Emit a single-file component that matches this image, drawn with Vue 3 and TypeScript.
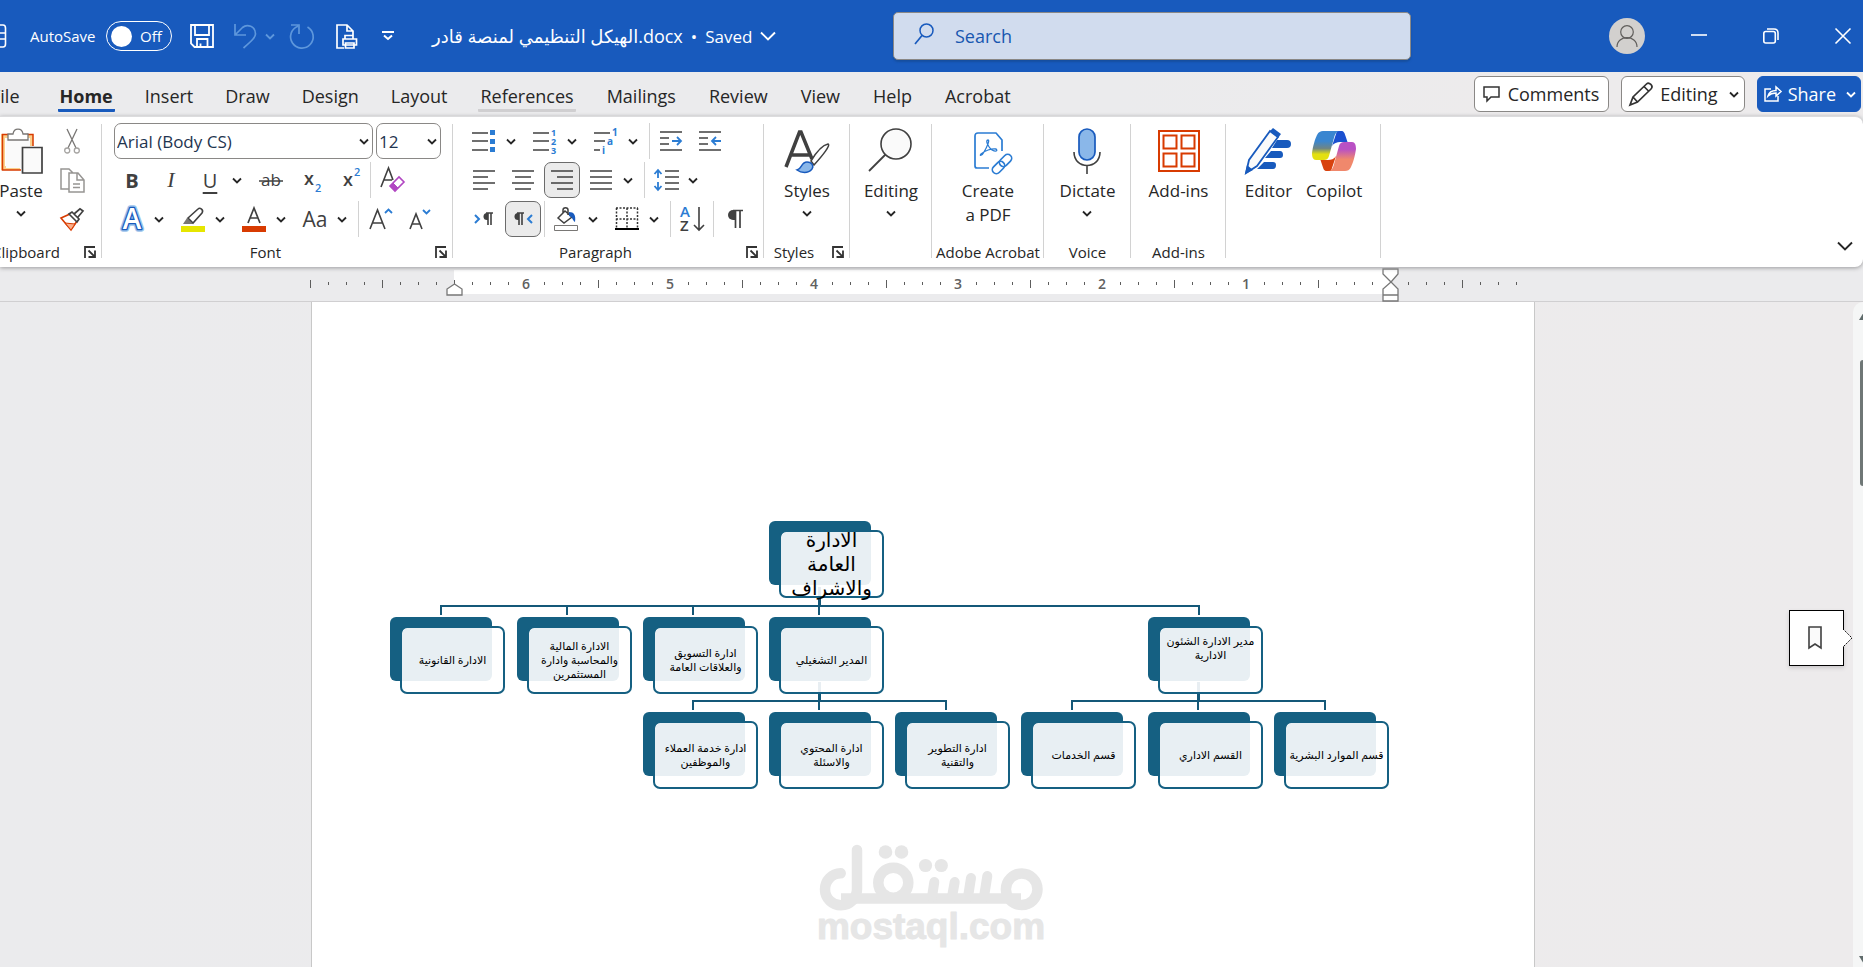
<script setup lang="ts">
import { ref } from 'vue'

interface Glyph { w: number; h: number; body: string }

const ink = 'fill="none" stroke="#404040" stroke-width="1.6"'
const line = 'fill="none" stroke="#fff" stroke-width="1.6"'
const sans = 'font-family="Open Sans, Noto Sans, sans-serif"'
const blue = '#2b7cd3'

const glyphs: Record<string, Glyph> = {
  chevron: { w: 10, h: 7, body: '<path d="M1 1.5 5 5.5 9 1.5" fill="none" stroke="currentColor" stroke-width="1.800"/>' },
  chevronWide: { w: 16, h: 10, body: '<path d="M1 1.5 8 8.5 15 1.5" fill="none" stroke="currentColor" stroke-width="1.900"/>' },
  table: { w: 8, h: 24, body: `<path d="M-8 1H3Q5.500 1 5.500 4V20Q5.500 23 3 23H-8M-8 9H5M-8 15H5" ${line}/>` },
  save: { w: 24, h: 24, body: '<path d="M1 1H23V23H4.500L1 19.500ZM5 1V11H19V1M7 23V15H17.500V23M10.500 23V19.500" fill="none" stroke="#fff" stroke-width="1.8"/>' },
  undo: { w: 23, h: 25, body: '<path d="M1 0V11H12M1.500 10.500 8.500 3.500C13 -.5 21.500 2 21.500 10 21.500 13 19 15.500 9.500 24" fill="none" stroke="#5e97dc" stroke-width="1.700"/>' },
  redo: { w: 25, h: 25, body: '<path d="M1 1H9V10M17.500 3A11.300 11.300 0 1 1 8 2.200" fill="none" stroke="#5e97dc" stroke-width="1.700"/>' },
  print: { w: 22, h: 25, body: '<path d="M8 24H1V1H11L17 7V11M11 1V7H17M9 15V11.500H17V15M7 15H20.500V21H7ZM9.500 19H18V24H9.500Z" fill="none" stroke="#fff" stroke-width="1.700"/>' },
  more: { w: 12, h: 10, body: '<path d="M0 1H12M2 4.500 6 8 10 4.500" fill="none" stroke="#fff" stroke-width="2"/>' },
  search: { w: 20, h: 22, body: '<circle cx="12.500" cy="7.500" r="6.500" fill="none" stroke="#185abd" stroke-width="1.500"/><path d="M8 12.500 1 21" stroke="#185abd" stroke-width="1.700"/>' },
  person: { w: 24, h: 24, body: '<circle cx="12" cy="8" r="6.300" fill="none" stroke="#605e5c" stroke-width="1.200"/><path d="M2 23C2 10.500 22 10.500 22 23" fill="none" stroke="#605e5c" stroke-width="1.200"/>' },
  minimize: { w: 16, h: 16, body: '<path d="M0 7H16" stroke="#fff" stroke-width="1.600"/>' },
  restore: { w: 16, h: 16, body: '<rect x=".8" y="3.500" width="11.500" height="11.500" rx="2" fill="none" stroke="#fff" stroke-width="1.600"/><path d="M4 1H11Q15 1 15 5V12" fill="none" stroke="#fff" stroke-width="1.600"/>' },
  close: { w: 16, h: 16, body: '<path d="M.5.5 15.500 15.500M15.500.5.5 15.500" stroke="#fff" stroke-width="1.600"/>' },
  comment: { w: 17, h: 17, body: '<path d="M1 1H16V11H8L4 15V11H1Z" fill="none" stroke="#333" stroke-width="1.500"/>' },
  pencil: { w: 24, h: 24, body: '<path d="M1 23 4 15 17.500 2C20 -.5 25 4 22 7L8.500 20ZM4 15 8.500 20M15 4.500 19.500 9" fill="none" stroke="#333" stroke-width="1.700"/>' },
  share: { w: 18, h: 18, body: '<path d="M7 5H1V17H14V12M4 12C5 8 8 6.500 12 6.500V3L17 7.500 12 12V9C8 9 6 10 4 12Z" transform="translate(0 -1)" fill="none" stroke="#fff" stroke-width="1.500"/>' },
  paste: { w: 44, h: 46, body: '<path d="M8 6H2V42H21V38H6V10H30V18H34V6H28" fill="#fbd08c"/><path d="M7 10H31V40H7Z" fill="#fafafa"/><path d="M9 6.500H3.500V42H22M28 6.500H34V18" fill="none" stroke="#d83b01" stroke-width="1.500"/><path d="M9 12V6H14C15-.5 23-.5 24 6H29V12Z" fill="#fff" stroke="#797775" stroke-width="1.300"/><path d="M23.500 19.500H43V45H23.500Z" fill="#fafafa" stroke="#404040" stroke-width="1.700"/>' },
  cut: { w: 16, h: 25, body: '<path d="M3 0 12 19M13 0 4 19" fill="none" stroke="#797775" stroke-width="1.300"/><circle cx="3.200" cy="21.500" r="2.500" fill="none" stroke="#a5a3a1" stroke-width="1.300"/><circle cx="12.800" cy="21.500" r="2.500" fill="none" stroke="#a5a3a1" stroke-width="1.300"/>' },
  copy: { w: 25, h: 25, body: '<path d="M9 21H1V1H9L13 5M9 5H18L24 12V24H9ZM17 5V12H24M13 16H20M13 19.500H20" fill="none" stroke="#979593" stroke-width="1.500"/>' },
  painter: { w: 24, h: 23, body: '<path d="M1 10 10 6 17 13 11 22Z" fill="#fff" stroke="#d83b01" stroke-width="1.600"/><path d="M5 15 15 16 11 22Z" fill="#fbb08c" stroke="#d83b01"/><path d="M9 6 12 4 19 11 17 14ZM14 6 20 .8 23 3 18 9" fill="#fff" stroke="#404040" stroke-width="1.700"/>' },
  strike: { w: 24, h: 24, body: `<text x="12" y="18" ${sans} font-size="17" text-anchor="middle" fill="#404040">ab</text><path d="M0 13H24" stroke="#404040" stroke-width="1.500"/>` },
  sub: { w: 20, h: 26, body: `<text x="4" y="18" ${sans} font-size="18" font-weight="600" fill="#404040">x</text><text x="15" y="25" ${sans} font-size="11" font-weight="600" fill="${blue}">2</text>` },
  sup: { w: 20, h: 26, body: `<text x="4" y="19" ${sans} font-size="18" font-weight="600" fill="#404040">x</text><text x="15" y="9" ${sans} font-size="11" font-weight="600" fill="${blue}">2</text>` },
  clear: { w: 25, h: 26, body: `<path d="M1 20 8.500 1 13 13M3.500 13H12" ${ink}/><path d="M10 19 19 10 24 15 15 24Z" fill="#fff" stroke="#b146c2" stroke-width="1.600"/><path d="M10 19 13 16 18 21 15 24Z" fill="#b146c2" stroke="#b146c2"/>` },
  effects: { w: 26, h: 26, body: `<g ${sans} font-size="28" font-weight="600" text-anchor="middle" stroke-linejoin="round"><text x="13" y="23" fill="#fff" stroke="#9cc3ec" stroke-width="5.500">A</text><text x="13" y="23" fill="#fff" stroke="#185abd" stroke-width="2.600">A</text><text x="13" y="23" fill="#fff">A</text></g>` },
  highlight: { w: 24, h: 25, body: '<path d="M0 19H24V25H0Z" fill="#e6e600"/><path d="M2 17 6 11 12 17Z" fill="#797775"/><path d="M7 11 17 2C19 0 23 3 21 6L12 16ZM7 11 12 16" fill="#fff" stroke="#404040" stroke-width="1.600"/>' },
  fontColor: { w: 24, h: 25, body: '<path d="M0 19H24V25H0Z" fill="#d83b01"/><path d="M6 16 12 1 18 16M8 11H16" fill="none" stroke="#404040" stroke-width="1.700"/>' },
  grow: { w: 23, h: 24, body: `<path d="M1 22 8.500 3 16 22M3.500 16H13.500" ${ink}/><path d="M16 6 19.500 2.500 23 6" fill="none" stroke="${blue}" stroke-width="1.800"/>` },
  shrink: { w: 21, h: 24, body: `<path d="M1 22 7 7 13 22M3 17H11" ${ink}/><path d="M14 3 17.500 6.500 21 3" fill="none" stroke="${blue}" stroke-width="1.800"/>` },
  bullets: { w: 24, h: 24, body: `<path d="M0 4H16M0 12H16M0 21H16" ${ink}/><path d="M18 1H23V6H18ZM18 10H23V15H18ZM18 18H23V23H18Z" fill="${blue}"/>` },
  numbering: { w: 24, h: 26, body: `<path d="M0 5H16M0 13H16M0 22H16" ${ink}/><g ${sans} font-size="9" font-weight="700" fill="${blue}"><text x="18" y="8">1</text><text x="18" y="17">2</text><text x="18" y="26">3</text></g>` },
  multilevel: { w: 24, h: 26, body: `<path d="M0 5H16M0 13H11M0 22H6" ${ink}/><g ${sans} font-size="10" font-weight="700" fill="${blue}"><text x="18" y="8">1</text><text x="13" y="17">a</text><text x="8" y="26">i</text></g>` },
  indentOut: { w: 22, h: 22, body: `<path d="M0 2H22M0 8H9M0 14H9M0 20H22" ${ink}/><path d="M12 11H21M17 7 21 11 17 15" fill="none" stroke="${blue}" stroke-width="1.800"/>` },
  indentIn: { w: 22, h: 22, body: `<path d="M0 2H22M0 8H9M0 14H9M0 20H22" ${ink}/><path d="M22 11H13M17 7 13 11 17 15" fill="none" stroke="${blue}" stroke-width="1.800"/>` },
  left: { w: 22, h: 22, body: `<path d="M0 2H22M0 8H15M0 14H22M0 20H15" ${ink}/>` },
  center: { w: 22, h: 22, body: `<path d="M0 2H22M3 8H19M0 14H22M3 20H19" ${ink}/>` },
  right: { w: 22, h: 22, body: `<path d="M0 2H22M6 8H22M0 14H22M6 20H22" ${ink}/>` },
  justify: { w: 22, h: 22, body: `<path d="M0 2H22M0 8H22M0 14H22M0 20H22" ${ink}/>` },
  spacing: { w: 25, h: 24, body: `<path d="M11 3H25M11 9H25M11 15H25M11 21H25" ${ink}/><path d="M4 10V2M.5 6 4 2 7.500 6M4 14V22M.5 18 4 22 7.500 18" fill="none" stroke="${blue}" stroke-width="1.800"/>` },
  ltr: { w: 20, h: 18, body: `<path d="M1 5 5 9 1 13" fill="none" stroke="${blue}" stroke-width="2"/><path d="M14 3H13A3.500 3.500 0 0 0 13 10H14Z" fill="#404040"/><path d="M14 3V15M17 3V15M12 3H19" ${ink}/>` },
  rtl: { w: 20, h: 18, body: `<path d="M19 5 15 9 19 13" fill="none" stroke="${blue}" stroke-width="2"/><path d="M6 3H5A3.500 3.500 0 0 0 5 10H6Z" fill="#404040"/><path d="M6 3V15M9 3V15M4 3H11" ${ink}/>` },
  bucket: { w: 24, h: 24, body: '<path d="M4 11 11 4 18 10 10 16ZM9 6V3C9 0 14 0 14 3V8" fill="none" stroke="#404040" stroke-width="1.500"/><path d="M15 5C20 5 22 8 21 15 18 13 19 10 15 9Z" fill="#185abd"/><path d="M.5 18.500H23.500V23.500H.5Z" fill="#fff" stroke="#797775"/>' },
  borders: { w: 24, h: 24, body: '<path d="M1 1H23M1 12H23M1.500 1V22M12 1V22M22.500 1V22" fill="none" stroke="#333" stroke-width="1.500" stroke-dasharray="2 1.500"/><path d="M0 22H24" stroke="#000" stroke-width="2"/>' },
  sort: { w: 24, h: 26, body: `<g ${sans} font-size="15" font-weight="600"><text x="0" y="11" fill="${blue}">A</text><text x="0" y="25" fill="#404040">Z</text></g><path d="M19 1V24M14 19 19 24 24 19" ${ink}/>` },
  pilcrow: { w: 16, h: 20, body: '<path d="M8 1H6A5 5 0 0 0 6 11H8Z" fill="#404040"/><path d="M8.500 1V19M13 1V19M6 1.500H16" fill="none" stroke="#404040" stroke-width="1.700"/>' },
  styles: { w: 44, h: 44, body: '<path d="M1 38 14.500 3H16L27 30M6 26H25" fill="none" stroke="#404040" stroke-width="3.500"/><path d="M26 32C32 22 38 16 43 15 46 16 38 26 29 36Z" fill="#fff" stroke="#404040" stroke-width="1.500"/><path d="M12 41C17 40 16 33 22 33 27 33 29 37 27 40 23 45 16 44 12 41Z" fill="#8ab7e9" stroke="#185abd" stroke-width="1.500"/>' },
  find: { w: 46, h: 50, body: '<circle cx="28" cy="18" r="15" fill="#fafafa" stroke="#404040" stroke-width="1.600"/><path d="M17.500 28.500 1 45" stroke="#404040" stroke-width="1.800"/>' },
  pdf: { w: 28, h: 38, body: `<g fill="none" stroke="${blue}" stroke-width="1.700" stroke-linejoin="round"><path d="M15 36H3Q1 36 1 34V4Q1 1 4 1H22L28 8V19"/><path d="M14 8C11 8 14 15 18 18 22 20 24 19 22 17 18 16 10 19 7 22 5 24 8 24 10 20 13 15 16 8 14 8Z" stroke-width="1.300"/><g transform="rotate(-45 28 32)"><rect x="16" y="28" width="14" height="8" rx="4"/><rect x="26" y="28" width="14" height="8" rx="4"/></g></g>` },
  mic: { w: 28, h: 46, body: `<rect x="6" y="1" width="16" height="31" rx="8" fill="#8ab7e9" stroke="#185abd" stroke-width="1.700"/><path d="M1 24C1 42 27 42 27 24M14 37V46" ${ink}/>` },
  addins: { w: 42, h: 42, body: '<path d="M1 1H41V41H1Z" fill="#fff" stroke="#d83b01" stroke-width="2"/><path d="M5.500 5.500H18.500V18.500H5.500ZM23.500 5.500H36.500V18.500H23.500ZM5.500 23.500H18.500V36.500H5.500ZM23.500 23.500H36.500V36.500H23.500Z" fill="none" stroke="#d83b01" stroke-width="2"/>' },
  editor: { w: 46, h: 46, body: '<path d="M32 12H42Q46 12 46 16 46 20 42 20H27ZM26 23H35Q38 23 38 27 38 30 35 30H20ZM19 34H28Q31 34 31 37 31 41 28 41H12Z" fill="#185abd"/><path d="M1 45 4 32 25 3 33 9 12 38Z" fill="#fafafa" stroke="#185abd" stroke-width="1.800"/><path d="M25 3 28 0 36 6 33 10ZM0 46 2 37 8 42Z" fill="#185abd"/>' },
  copilot: { w: 44, h: 40, body: '<defs><linearGradient id="cpA" x1="0" y1="0" x2="0" y2="1"><stop offset=".35" stop-color="#3a86d0"/><stop offset=".6" stop-color="#6f8584"/><stop offset=".8" stop-color="#e3e010"/></linearGradient><linearGradient id="cpB" x1="0" y1="0" x2="0" y2="1"><stop offset=".25" stop-color="#b951c4"/><stop offset=".6" stop-color="#f0886c"/></linearGradient></defs><path d="M25 0H29C32 0 32.500 2 33.500 5L35.500 11H28C25 11 22 12 20 15Z" fill="#1b50d0"/><path d="M19 40H15C12 40 11.500 38 10.500 35L8.500 29H16C19 29 22 28 24 25Z" fill="#d8430f"/><path d="M11 0H28C25 0 23.500 2 22.500 5L17 25C16 28 14.500 29 12 29H4C1 29 0 26 0 22 1 15 3 8 5 4 6.500 1 8.500 0 11 0Z" fill="url(#cpA)"/><path d="M33 40H16C19 40 20.500 38 21.500 35L27 15C28 12 29.500 11 32 11H40C43 11 44 14 44 18 43 25 41 32 39 36 37.500 39 35.500 40 33 40Z" fill="url(#cpB)"/>' },
  launcher: { w: 12, h: 12, body: '<path d="M1 12V1H11M4.500 4.500 11 11M11 4.500V11H4.500" fill="none" stroke="#333" stroke-width="1.800"/>' },
  bookmark: { w: 14, h: 24, body: '<path d="M1 1H13V22L7 18 1 22Z" fill="#fafafa" stroke="#404040" stroke-width="1.600"/>' },
}

const tabs = ['File', 'Home', 'Insert', 'Draw', 'Design', 'Layout', 'References', 'Mailings', 'Review', 'View', 'Help', 'Acrobat']
const activeTab = ref('Home')

interface Tool { name: string; icon?: string; text?: string; cls?: string; split?: boolean; on?: boolean; sep?: boolean }
const sep: Tool = { name: 'sep', sep: true }

const clipboardTools: Tool[] = [
  { name: 'Cut', icon: 'cut' }, { name: 'Copy', icon: 'copy' }, { name: 'Format Painter', icon: 'painter' },
]
const fontRows: Tool[][] = [
  [
    { name: 'Bold', text: 'B', cls: 'bold' }, { name: 'Italic', text: 'I', cls: 'italic' },
    { name: 'Underline', text: 'U', cls: 'underline', split: true }, { name: 'Strikethrough', icon: 'strike' },
    { name: 'Subscript', icon: 'sub' }, { name: 'Superscript', icon: 'sup' }, sep,
    { name: 'Clear Formatting', icon: 'clear' },
  ],
  [
    { name: 'Text Effects', icon: 'effects', split: true }, { name: 'Highlight', icon: 'highlight', split: true },
    { name: 'Font Color', icon: 'fontColor', split: true }, { name: 'Change Case', text: 'Aa', cls: 'case', split: true }, sep,
    { name: 'Grow Font', icon: 'grow' }, { name: 'Shrink Font', icon: 'shrink' },
  ],
]
const paragraphRows: Tool[][] = [
  [
    { name: 'Bullets', icon: 'bullets', split: true }, { name: 'Numbering', icon: 'numbering', split: true },
    { name: 'Multilevel List', icon: 'multilevel', split: true }, sep,
    { name: 'Decrease Indent', icon: 'indentOut' }, { name: 'Increase Indent', icon: 'indentIn' },
  ],
  [
    { name: 'Align Left', icon: 'left' }, { name: 'Center', icon: 'center' }, { name: 'Align Right', icon: 'right', on: true },
    { name: 'Justify', icon: 'justify', split: true }, sep, { name: 'Line Spacing', icon: 'spacing', split: true },
  ],
  [
    { name: 'Left-to-Right', icon: 'ltr' }, { name: 'Right-to-Left', icon: 'rtl', on: true }, sep,
    { name: 'Shading', icon: 'bucket', split: true }, { name: 'Borders', icon: 'borders', split: true }, sep,
    { name: 'Sort', icon: 'sort' }, sep, { name: 'Show Marks', icon: 'pilcrow' },
  ],
]

interface Big { label: string[]; icon: string; arrow?: boolean }
interface Group { cls: string; label: string; launcher?: boolean; items: Big[] }
const groups: Group[] = [
  { cls: 'g-styles', label: 'Styles', launcher: true, items: [{ label: ['Styles'], icon: 'styles', arrow: true }] },
  { cls: 'g-editing', label: '', items: [{ label: ['Editing'], icon: 'find', arrow: true }] },
  { cls: 'g-adobe', label: 'Adobe Acrobat', items: [{ label: ['Create', 'a PDF'], icon: 'pdf' }] },
  { cls: 'g-voice', label: 'Voice', items: [{ label: ['Dictate'], icon: 'mic', arrow: true }] },
  { cls: 'g-addins', label: 'Add-ins', items: [{ label: ['Add-ins'], icon: 'addins' }] },
  { cls: 'g-editor', label: '', items: [{ label: ['Editor'], icon: 'editor' }, { label: ['Copilot'], icon: 'copilot' }] },
]

/* Ruler: one inch is 144 units, counted leftwards from the right margin. */
const rulerZero = 1079
const ticks = Array.from({ length: 68 }, (_, i) => {
  const k = i - 7
  const numbered = k > 0 && k < 52 && k % 8 === 0
  return { x: rulerZero - k * 18, tall: k % 4 === 0, label: numbered ? String(k / 8) : '', hidden: k === 0 || numbered }
})

interface Node { x: number; y: number; lines: string[]; cls?: string }
const nodes: Node[] = [
  { x: 379, y: 0, lines: ['الادارة', 'العامة', 'والاشراف'], cls: 'root' },
  { x: 0, y: 96, lines: ['الادارة القانونية'] },
  { x: 127, y: 96, lines: ['الادارة المالية', 'والمحاسبة وادارة', 'المستثمرين'] },
  { x: 253, y: 96, lines: ['ادارة التسويق', 'والعلاقات العامة'] },
  { x: 379, y: 96, lines: ['المدير التشغيلي'] },
  { x: 758, y: 96, lines: ['مدير الادارة الشئون', 'الادارية'], cls: 'raised' },
  { x: 253, y: 191, lines: ['ادارة خدمة العملاء', 'والموظفين'] },
  { x: 379, y: 191, lines: ['ادارة المحتوي', 'والاسئلة'] },
  { x: 505, y: 191, lines: ['ادارة التطوير', 'والتقنية'] },
  { x: 631, y: 191, lines: ['قسم الخدمات'] },
  { x: 758, y: 191, lines: ['القسم الاداري'] },
  { x: 884, y: 191, lines: ['قسم الموارد البشرية'] },
]
</script>

<template>
  <div class="app">
    <header class="titlebar">
      <div class="quick">
        <button class="plain q-table" aria-label="Window"><svg width="8" height="24" v-html="glyphs.table.body" /></button>
        <label class="autosave" for="autosave">AutoSave</label>
        <label class="toggle"><input id="autosave" type="checkbox"><span class="knob" /><span>Off</span></label>
        <button class="plain q-save" aria-label="Save"><svg width="24" height="24" v-html="glyphs.save.body" /></button>
        <button class="plain q-undo" aria-label="Undo"><svg width="23" height="25" v-html="glyphs.undo.body" /><svg class="dim" width="10" height="7" v-html="glyphs.chevron.body" /></button>
        <button class="plain q-redo" aria-label="Redo"><svg width="25" height="25" v-html="glyphs.redo.body" /></button>
        <button class="plain q-print" aria-label="Print Preview"><svg width="22" height="25" v-html="glyphs.print.body" /></button>
        <button class="plain q-more" aria-label="Customize"><svg width="12" height="10" v-html="glyphs.more.body" /></button>
        <button class="plain doc-name"><bdi dir="ltr">الهيكل التنظيمي لمنصة قادر<span dir="ltr">&lrm;.docx</span></bdi><span>•</span><span>Saved</span><svg width="16" height="10" v-html="glyphs.chevronWide.body" /></button>
      </div>
      <label class="search"><svg width="20" height="22" v-html="glyphs.search.body" /><input type="search" placeholder="Search" aria-label="Search"></label>
      <div class="window-controls">
        <button class="plain avatar" aria-label="Account"><svg width="24" height="24" v-html="glyphs.person.body" /></button>
        <button v-for="n in ['minimize', 'restore', 'close']" :key="n" class="plain" :aria-label="n"><svg width="16" height="16" v-html="glyphs[n].body" /></button>
      </div>
    </header>

    <nav class="tabs">
      <button v-for="t in tabs" :key="t" class="plain tab" :class="{ active: t === activeTab, hovered: t === 'References' }" @click="activeTab = t">{{ t }}</button>
      <div class="actions">
        <button class="action comments"><svg width="17" height="17" v-html="glyphs.comment.body" />Comments</button>
        <button class="action"><svg width="24" height="24" v-html="glyphs.pencil.body" />Editing<svg class="end" width="10" height="7" v-html="glyphs.chevron.body" /></button>
        <button class="action primary"><svg width="18" height="18" v-html="glyphs.share.body" />Share<svg class="end" width="10" height="7" v-html="glyphs.chevron.body" /></button>
      </div>
    </nav>

    <section class="ribbon">
      <div class="group g-clipboard">
        <div class="body">
          <button class="plain big"><span class="pic"><svg width="44" height="46" v-html="glyphs.paste.body" /></span><span>Paste</span><svg class="arrow" width="10" height="7" v-html="glyphs.chevron.body" /></button>
          <div class="rows">
            <button v-for="t in clipboardTools" :key="t.name" class="plain tool" :aria-label="t.name"><svg :width="glyphs[t.icon!].w" :height="glyphs[t.icon!].h" v-html="glyphs[t.icon!].body" /></button>
          </div>
        </div>
        <footer><span>Clipboard</span><button class="plain launch" aria-label="Clipboard options"><svg width="12" height="12" v-html="glyphs.launcher.body" /></button></footer>
      </div>

      <div class="group g-font">
        <div class="rows">
          <div class="combos">
            <label class="combo family"><select aria-label="Font"><option>Arial (Body CS)</option></select><svg width="10" height="7" v-html="glyphs.chevron.body" /></label>
            <label class="combo size"><select aria-label="Font size"><option>12</option></select><svg width="10" height="7" v-html="glyphs.chevron.body" /></label>
          </div>
          <div v-for="(row, r) in fontRows" :key="r" class="row">
            <template v-for="(t, i) in row" :key="i">
              <i v-if="t.sep" class="sep" />
              <span v-else class="cell" :class="{ split: t.split }">
                <button class="plain tool" :class="[t.cls, { on: t.on }]" :aria-label="t.name"><svg v-if="t.icon" :width="glyphs[t.icon].w" :height="glyphs[t.icon].h" v-html="glyphs[t.icon].body" /><template v-else>{{ t.text }}</template></button>
                <button v-if="t.split" class="plain drop" :aria-label="t.name + ' options'"><svg width="10" height="7" v-html="glyphs.chevron.body" /></button>
              </span>
            </template>
          </div>
        </div>
        <footer><span>Font</span><button class="plain launch" aria-label="Font options"><svg width="12" height="12" v-html="glyphs.launcher.body" /></button></footer>
      </div>

      <div class="group g-paragraph">
        <div class="rows">
          <div v-for="(row, r) in paragraphRows" :key="r" class="row">
            <template v-for="(t, i) in row" :key="i">
              <i v-if="t.sep" class="sep" />
              <span v-else class="cell" :class="{ split: t.split }">
                <button class="plain tool" :class="{ on: t.on }" :aria-label="t.name"><svg :width="glyphs[t.icon!].w" :height="glyphs[t.icon!].h" v-html="glyphs[t.icon!].body" /></button>
                <button v-if="t.split" class="plain drop" :aria-label="t.name + ' options'"><svg width="10" height="7" v-html="glyphs.chevron.body" /></button>
              </span>
            </template>
          </div>
        </div>
        <footer><span>Paragraph</span><button class="plain launch" aria-label="Paragraph options"><svg width="12" height="12" v-html="glyphs.launcher.body" /></button></footer>
      </div>

      <div v-for="g in groups" :key="g.cls" class="group" :class="g.cls">
        <div class="body">
          <button v-for="b in g.items" :key="b.icon" class="plain big">
            <span class="pic"><svg :width="glyphs[b.icon].w" :height="glyphs[b.icon].h" v-html="glyphs[b.icon].body" /></span>
            <span v-for="l in b.label" :key="l">{{ l }}</span>
            <svg v-if="b.arrow" class="arrow" width="10" height="7" v-html="glyphs.chevron.body" />
          </button>
        </div>
        <footer><span>{{ g.label }}</span><button v-if="g.launcher" class="plain launch" aria-label="Styles options"><svg width="12" height="12" v-html="glyphs.launcher.body" /></button></footer>
      </div>
      <button class="plain collapse" aria-label="Collapse ribbon"><svg width="16" height="10" v-html="glyphs.chevronWide.body" /></button>
    </section>

    <div class="ruler">
      <svg class="scale" width="1224" height="34" viewBox="0 0 1224 34">
        <rect x="143" y="3" width="936" height="24" fill="#fff" />
        <template v-for="t in ticks" :key="t.x">
          <path v-if="!t.hidden" :d="t.tall ? `M${t.x} 13V21` : `M${t.x} 15V18`" stroke="#5d5d5d" stroke-width="1" shape-rendering="crispEdges" />
          <text v-if="t.label" :x="t.x" y="22" class="num">{{ t.label }}</text>
        </template>
        <path d="M136 28V22L143.500 17 151 22V28Z" fill="#fff" stroke="#777" stroke-width="1.300" />
        <path d="M1072 2H1087V7L1080 15 1087 22V34H1072V22L1080 15 1072 7ZM1072 28H1087" fill="#fff" stroke="#777" stroke-width="1.300" />
      </svg>
    </div>

    <main class="workspace">
      <div class="canvas">
        <article class="page">
          <div class="chart">
            <svg class="links" width="1000" height="270" viewBox="0 0 1000 270" fill="none" stroke="#145878" stroke-width="2">
              <path d="M51 94V85H809V94M177 85V94M303 85V94M429 85V94" />
              <path d="M303 189V180H556V189M429 180V189M682 189V180H935V189M808 180V189" />
              <path d="M429.500 66V86M429.500 161V181M808.500 161V181" stroke-width="3" />
            </svg>
            <div v-for="n in nodes" :key="n.lines.join()" class="node" :class="n.cls" :style="{ left: n.x + 'px', top: n.y + 'px' }">
              <div class="face" dir="rtl"><span v-for="l in n.lines" :key="l">{{ l }}</span></div>
            </div>
          </div>
          <svg class="mark" width="300" height="147" viewBox="0 0 300 147" role="img" aria-label="mostaql.com">
            <g fill="none" stroke="#e6e6e6" stroke-width="10.500" stroke-linecap="round">
              <circle cx="241.700" cy="69.300" r="15.800" />
              <circle cx="113.300" cy="62.700" r="15" />
              <path d="M61 78.500H241" stroke-linecap="butt" />
              <path d="M60.700 53.300A16 16 0 1 0 77 69.300V30" />
              <path d="M154.300 62 152 77M174.700 62 172 77M191 58 188 77M207.300 56 204 77" stroke-width="10" />
            </g>
            <g fill="#e6e6e6"><circle cx="105.500" cy="32" r="6.800" /><circle cx="121.500" cy="32" r="6.800" /><circle cx="145.500" cy="45.500" r="6.600" /><circle cx="161.300" cy="45.500" r="6.600" /></g>
            <text x="151" y="119" class="domain">mostaql.com</text>
          </svg>
        </article>
        <button class="bookmark" aria-label="Bookmark"><svg width="14" height="24" v-html="glyphs.bookmark.body" /><svg class="pointer" width="10" height="20" viewBox="0 0 10 20"><path d="M0 1 9 10 0 19" fill="#fff" stroke="#000" stroke-dasharray="1.500 1" /></svg></button>
      </div>
      <div class="scrollbar"><i class="up" /><i class="thumb" /><i class="down" /></div>
    </main>
  </div>
</template>

<style>
html, body { margin: 0; height: 100%; overflow: hidden; }
</style>

<style scoped>
.app { height: 100vh; display: flex; flex-direction: column; background: #ebebed; color: #262626; font-family: "Open Sans", "Noto Sans", "DejaVu Sans", sans-serif; overflow: hidden; }
.app *, .app *::before { box-sizing: border-box; }
svg { display: block; flex: none; overflow: visible; }
.plain { border: 0; background: none; padding: 0; margin: 0; color: inherit; font: inherit; display: flex; align-items: center; justify-content: center; flex: none; white-space: nowrap; }

.titlebar { flex: none; height: 72px; background: #185abd; color: #fff; display: flex; align-items: center; }
.quick { flex: 0 0 893px; display: flex; align-items: center; }
.autosave { margin-left: 22px; width: 76px; font-size: 15px; }
.toggle { width: 66px; height: 30px; border: 1px solid #fff; border-radius: 15px; display: flex; align-items: center; gap: 8px; padding-left: 4px; font-size: 15px; }
.toggle input { appearance: none; width: 0; height: 0; margin: 0; position: absolute; }
.knob { width: 21px; height: 21px; border-radius: 50%; background: #fff; }
.q-save { margin-left: 18px; }
.q-undo { margin-left: 20px; gap: 8px; }
.dim { color: #5e97dc; }
.q-redo { margin-left: 15px; }
.q-print { margin-left: 21px; }
.q-more { margin-left: 24px; }
.doc-name { margin-left: 38px; gap: 8px; font-size: 17px; }
.doc-name bdi { font-size: 18px; }
.search { flex: 0 1 518px; height: 48px; background: #d1dcee; border: 1px solid #8a8886; border-radius: 5px; display: flex; align-items: center; padding-left: 20px; gap: 21px; box-shadow: 0 2px 2px #164f9f; }
.search svg { margin-top: -4px; }
.search input { flex: 1; min-width: 0; border: 0; background: none; outline: 0; padding: 0; font: inherit; font-size: 18px; color: #185abd; }
.search input::placeholder { color: #1857b0; opacity: 1; }
.window-controls { margin-left: auto; display: flex; align-items: center; gap: 56px; padding-right: 12px; }
.avatar { width: 36px; height: 36px; border-radius: 50%; background: #d2d0ce; margin-right: -10px; }

.tabs { flex: none; height: 44px; display: flex; align-items: center; padding-right: 2px; background: linear-gradient(90deg, #ebebed 60%, #edebec 80%); }
.tab { font-size: 18px; height: 34px; line-height: 24px; margin-top: 2px; margin-right: 28px; padding: 6px 2px 2px; border-bottom: 3px solid transparent; border-radius: 1px; }
.tab:nth-child(n+6) { margin-right: 29px; }
.tab:first-child { margin-left: -11px; margin-right: 36px; }
.active { font-weight: 700; border-bottom-color: #185abd; }
.hovered { border-bottom-color: #d0cfd1; }
.actions { margin-left: auto; display: flex; gap: 12px; }
.action { height: 36px; border: 1px solid #8a8886; border-radius: 6px; background: #fff; color: #262626; font: inherit; font-size: 18px; display: flex; align-items: center; gap: 7px; padding: 0 7px; white-space: nowrap; }
.action.comments { padding: 0 9px 0 8px; gap: 8px; }
.action .end { margin-left: 4px; margin-right: -2px; }
.action.primary { background: #185abd; border-color: #185abd; color: #fff; gap: 6px; padding: 0 6px; }

.ribbon { flex: none; height: 151px; display: flex; background: #fff; border-top: 1px solid #dcdcde; border-radius: 0 8px 8px 0; box-shadow: 0 1px 4px #9a9a9c; padding-top: 6px; position: relative; z-index: 1; }
.group { flex: none; height: 141px; position: relative; display: flex; flex-direction: column; }
.group::before { content: ""; position: absolute; right: 0; top: 1px; height: 134px; border-right: 1px solid #d2d2d2; }
.body, .rows { display: flex; height: 114px; }
.body { justify-content: center; }
.rows { flex-direction: column; gap: 3px; }
.row { display: flex; gap: 3px; height: 36px; }
.cell { display: flex; }
.split { margin-right: 4px; }
.sep { width: 1px; height: 36px; background: #d2d2d2; }
.tool { width: 36px; height: 36px; }
.tool.on { border: 1px solid #6b6b6b; border-radius: 7px; background: #ebebeb; }
.drop { width: 18px; height: 36px; }
.bold { font-size: 20px; font-weight: 700; color: #404040; }
.italic { font-family: "Liberation Serif", serif; font-style: italic; font-size: 22px; color: #404040; }
.underline { font-size: 20px; text-decoration: underline; text-underline-offset: 4px; text-decoration-thickness: 2px; color: #404040; }
.case { font-size: 21px; color: #404040; }
footer { height: 24px; margin-top: 3px; display: flex; align-items: center; justify-content: center; font-size: 15px; line-height: 24px; white-space: nowrap; }
.launch { position: absolute; right: 6px; bottom: 6px; }
.big { flex-direction: column; justify-content: flex-start; font-size: 17px; line-height: 24px; }
.pic { height: 56px; display: flex; align-items: center; justify-content: center; }
.arrow { margin-top: 7px; }
.combos { display: flex; gap: 3px; }
.combo { height: 36px; border: 1px solid #8a8886; border-radius: 7px; display: flex; align-items: center; padding: 0 3px 0 2px; }
.combo select { appearance: none; border: 0; background: none; outline: 0; flex: 1; min-width: 0; font: inherit; font-size: 17px; color: #1f3550; padding: 0; }
.family { width: 259px; }
.size { width: 65px; }
.g-clipboard { width: 102px; }
.g-clipboard .body { justify-content: flex-start; }
.g-clipboard .big { width: 56px; margin-left: -7px; margin-right: 5px; }
.g-clipboard footer { justify-content: flex-end; padding-right: 42px; }
.g-font { width: 351px; padding-left: 12px; }
.g-font footer { padding-right: 36px; }
.g-paragraph { width: 311px; padding-left: 13px; }
.g-paragraph footer { padding-right: 39px; }
.g-styles { width: 86px; }
.g-styles footer { padding-right: 26px; }
.g-editing { width: 82px; }
.g-adobe { width: 112px; }
.g-voice { width: 87px; }
.g-addins { width: 95px; }
.g-editor { width: 155px; }
.g-editor .body { gap: 14px; }
.collapse { margin-left: auto; align-self: flex-end; padding: 0 10px 16px 0; }

.ruler { flex: none; height: 35px; display: flex; justify-content: center; padding-right: 17px; border-bottom: 1px solid #d0cfd1; background: #ebebed; }
.num { font-size: 14px; font-weight: 600; fill: #606060; text-anchor: middle; }

.workspace { flex: 1; min-height: 0; display: flex; background: #edebec; }
.canvas { flex: 1; min-width: 0; display: flex; justify-content: center; padding-right: 7px; position: relative; overflow: hidden; background: linear-gradient(90deg, #ebebed, #edebec); }
.page { flex: none; width: 1224px; background: #fff; border: solid #c8c8c8; border-width: 0 1px; padding: 219px 0 0 78px; display: flex; flex-direction: column; align-items: flex-start; }
.chart { position: relative; width: 1000px; height: 269px; flex: none; }
.links { position: absolute; left: 0; top: 0; }
.node { position: absolute; width: 102px; height: 64px; border-radius: 6px; background: #156082; }
.face { position: absolute; left: 10px; top: 9px; width: 105px; height: 68px; border: 2px solid #156082; border-radius: 7px; background: rgba(255, 255, 255, .9); background-clip: padding-box; display: flex; flex-direction: column; align-items: center; justify-content: center; font-family: "Liberation Serif", "DejaVu Sans", serif; font-size: 11px; line-height: 14px; color: #000; white-space: nowrap; }
.root .face { font-size: 20px; line-height: 24px; }
.raised .face { padding-bottom: 24px; }
.mark { flex: none; margin: 30px 0 0 390px; }
.domain { font-family: "Liberation Sans", sans-serif; font-weight: 700; font-size: 37px; text-anchor: middle; fill: #e6e6e6; stroke: #e6e6e6; stroke-width: 1px; stroke-linejoin: round; }
.bookmark { position: absolute; right: 9px; top: 308px; width: 55px; height: 56px; border: 1px solid #000; background: #fff; padding: 0 4px 0 0; display: flex; align-items: center; justify-content: center; box-shadow: 0 2px 4px #c8c6c8; }
.pointer { position: absolute; left: 53px; top: 17px; }
.scrollbar { flex: none; width: 10px; background: #f5f6f6; border-top-left-radius: 10px; display: flex; flex-direction: column; align-items: flex-end; overflow: hidden; }
.up, .down { width: 0; height: 0; border: solid transparent; border-width: 0 5px 8px; border-bottom-color: #5f6b6b; margin: 10px -6px 0 0; }
.down { border-width: 8px 5px 0; border-top-color: #5f6b6b; margin: auto -6px 3px 0; }
.thumb { width: 3px; height: 126px; margin-top: 40px; background: #6f7776; border-radius: 3px 0 0 3px; }
</style>
